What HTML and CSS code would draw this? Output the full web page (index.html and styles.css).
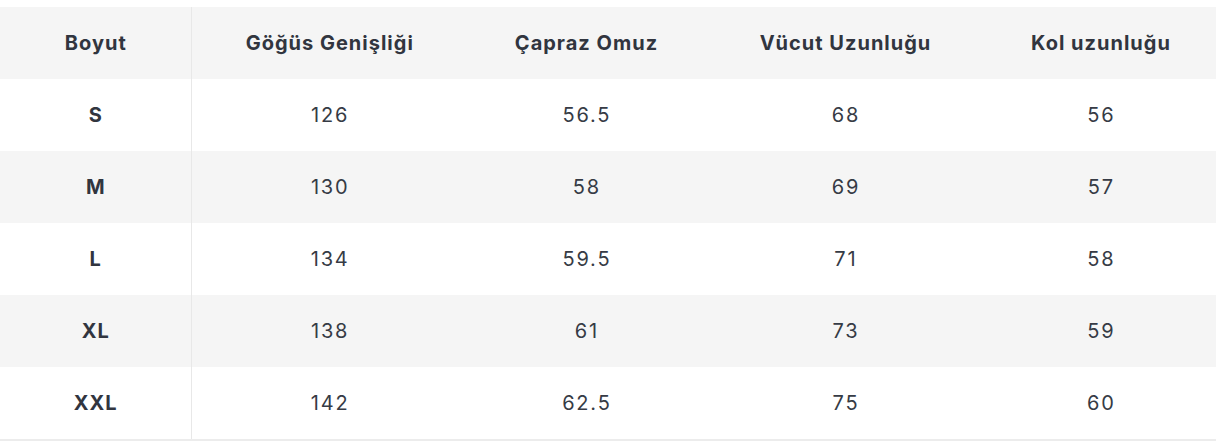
FILE: index.html
```html
<!DOCTYPE html>
<html lang="tr">
<head>
<meta charset="utf-8">
<link rel="stylesheet" href="styles.css">
</head>
<body>
<div class="wrap">
<table class="size-table">
<colgroup>
<col class="c1"><col class="c2"><col class="c3"><col class="c4"><col class="c5">
</colgroup>
<thead>
<tr><th>Boyut</th><th>Göğüs Genişliği</th><th>Çapraz Omuz</th><th>Vücut Uzunluğu</th><th>Kol uzunluğu</th></tr>
</thead>
<tbody>
<tr><th>S</th><td>126</td><td>56.5</td><td>68</td><td>56</td></tr>
<tr><th>M</th><td>130</td><td>58</td><td>69</td><td>57</td></tr>
<tr><th>L</th><td>134</td><td>59.5</td><td>71</td><td>58</td></tr>
<tr><th>XL</th><td>138</td><td>61</td><td>73</td><td>59</td></tr>
<tr><th>XXL</th><td>142</td><td>62.5</td><td>75</td><td>60</td></tr>
</tbody>
</table>
</div>
</body>
</html>
```

FILE: styles.css
```css
html, body {
  margin: 0;
  padding: 0;
  background: #ffffff;
}
.wrap {
  padding-top: 7px;
  width: 1216px;
}
.size-table {
  width: 1216px;
  border-collapse: collapse;
  table-layout: fixed;
  font-family: Inter, "Noto Sans", sans-serif;
  font-size: 20px;
  color: #363b45;
  border-bottom: 2px solid #ececec;
}
.c1 { width: 191px; }
.c2 { width: 276px; }
.c3 { width: 238px; }
.c4 { width: 280px; }
.c5 { width: 231px; }
.size-table th,
.size-table td {
  height: 72px;
  padding: 0;
  text-align: center;
  vertical-align: middle;
  line-height: 24px;
}
.size-table th {
  font-weight: 650;
  color: #31353f;
  letter-spacing: 1px;
  text-indent: 1px;
}
.size-table td {
  font-weight: 400;
  letter-spacing: 1.8px;
  text-indent: 1.8px;
}
.size-table tr > :first-child {
  border-right: 1px solid #e8e8e8;
}
.size-table thead tr,
.size-table tbody tr:nth-child(even) {
  background: #f5f5f5;
}
.size-table tbody tr:nth-child(odd) {
  background: #ffffff;
}
```
